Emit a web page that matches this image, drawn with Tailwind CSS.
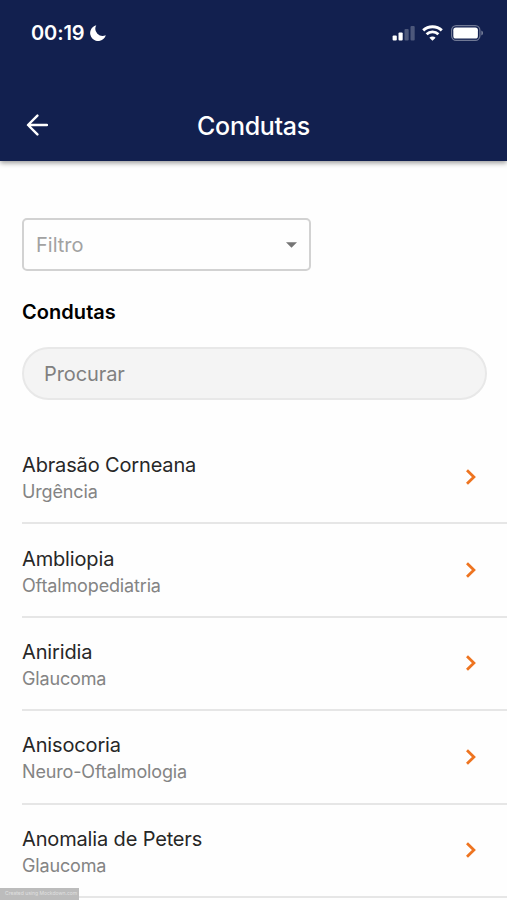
<!DOCTYPE html>
<html lang="pt-BR">
<head>
<meta charset="utf-8">
<meta name="viewport" content="width=device-width, initial-scale=1">
<title>Condutas</title>
<script src="https://cdn.jsdelivr.net/npm/@tailwindcss/browser@4"></script>
</head>
<body class="bg-white">
<div class="relative flex h-[900px] w-[507px] flex-col overflow-hidden bg-[#fefefe] font-['Inter','Liberation_Sans',sans-serif]">
  <header class="flex h-[161px] shrink-0 flex-col bg-[#12204f] text-white shadow-[0_2px_5px_rgba(0,0,0,0.4)]">
    <div class="flex h-[66px] items-center justify-between pr-[24px] pl-[31px]">
      <div class="flex items-center gap-[5px]">
        <span class="text-[20px] leading-6 font-semibold tracking-[-0.1px]">00:19</span>
        <svg class="size-4" viewBox="0 0 16 16" fill="#fff"><path d="M6.3 .2A8 8 0 1 0 15.8 10.3A7.3 7.3 0 0 1 6.3 .2Z"/></svg>
      </div>
      <div class="flex items-center">
        <svg class="mr-[7px] h-4 w-[23px]" viewBox="0 0 23 16" fill="#fff"><rect x=".6" y="10.5" width="4.2" height="5" rx="1"/><rect x="6.5" y="7.5" width="4.2" height="8" rx="1"/><rect x="12.5" y="4" width="4.2" height="11.5" rx="1" opacity=".25"/><rect x="18.5" y="1" width="4.2" height="14.5" rx="1" opacity=".25"/></svg>
        <svg class="mr-[8px] h-4 w-[21px]" viewBox="0 0 21 16" fill="none" stroke="#fff" stroke-width="2.9"><path d="M1.200 5.4A13.6 13.6 0 0 1 19.800 5.4M4.6 9.2A8.7 8.7 0 0 1 16.4 9.2"/><path d="M10.5 15.8L7.4 12.7A4.4 4.4 0 0 1 13.6 12.7Z" fill="#fff" stroke="none"/></svg>
        <svg class="h-4 w-[32px]" viewBox="0 0 32 16"><rect x=".6" y=".6" width="28.3" height="14.8" rx="4.6" fill="none" stroke="#fff" stroke-opacity=".4" stroke-width="1.2"/><rect x="2.3" y="2.6" width="24.6" height="11" rx="2.6" fill="#fff"/><path d="M30.4 5.6Q32 6.4 32 8T30.4 10.4Z" fill="#fff" opacity=".45"/></svg>
      </div>
    </div>
    <div class="grid h-[95px] grid-cols-[80px_1fr_80px] items-center pt-[23px]">
      <svg class="ml-[26px] h-[22px] w-[22px]" viewBox="0 0 22 22" fill="none" stroke="#fff" stroke-width="2.4" stroke-linecap="round" stroke-linejoin="round"><path d="M21 11H2.2M11.4 1.6L2 11l9.4 9.4"/></svg>
      <h1 class="pt-px text-center text-[25px] leading-8 font-medium tracking-[-0.3px]">Condutas</h1>
    </div>
  </header>
  <main class="flex flex-col pl-[22px]">
    <div class="mt-[57px] flex h-[53px] w-[289px] items-center justify-between rounded-[5px] border-2 border-[#d2d2d2] pr-[12px] pl-[12px] text-[20px] text-[#a2a2a2]">
      <span class="pt-px">Filtro</span>
      <svg class="h-[6px] w-[11px]" viewBox="0 0 11 6" fill="#757575"><path d="M0 .3h11L5.500 5.800Z"/></svg>
    </div>
    <h2 class="mt-[27px] text-[20px] leading-7 font-semibold tracking-[0.05px] text-black">Condutas</h2>
    <div class="mt-[21px] flex h-[53px] w-[465px] items-center rounded-full border-2 border-[#e8e8e8] bg-[#f4f4f4] pl-[20px] text-[20px] tracking-[-0.1px] text-[#808080]">Procurar</div>
    <ul id="lista" class="mt-[31px]"></ul>
  </main>
  <div class="absolute bottom-0 left-0 flex h-[12px] w-[79px] items-center bg-[#bcbcbc] pl-[5px] text-[5px] whitespace-nowrap text-[#e0e0e0]">Created using Mockdown.com</div>
</div>
<template id="linha">
  <li class="flex h-[93.4px] items-center justify-between border-b-2 border-[#e6e6e6] pr-[30px]">
    <div class="pt-[3px]">
      <p data-t="nome" class="text-[20px] leading-7 tracking-[-0.15px] text-[#272727]"></p>
      <p data-t="area" class="text-[18px] leading-[26px] tracking-[-0.15px] text-[#848484]"></p>
    </div>
    <svg class="h-4 w-[12px]" viewBox="0 0 12 16" fill="none" stroke="#ee7420" stroke-width="2.8"><path d="M2 1.300L8.900 8L2 14.700"/></svg>
  </li>
</template>
<script>
const condutas = [["Abrasão Corneana","Urgência"],["Ambliopia","Oftalmopediatria"],["Aniridia","Glaucoma"],["Anisocoria","Neuro-Oftalmologia"],["Anomalia de Peters","Glaucoma"]];
const lista = document.getElementById("lista");
for (const [nome, area] of condutas) {
  const li = document.getElementById("linha").content.cloneNode(true);
  li.querySelector('[data-t=nome]').textContent = nome;
  li.querySelector('[data-t=area]').textContent = area;
  lista.append(li);
}
</script>
</body>
</html>
